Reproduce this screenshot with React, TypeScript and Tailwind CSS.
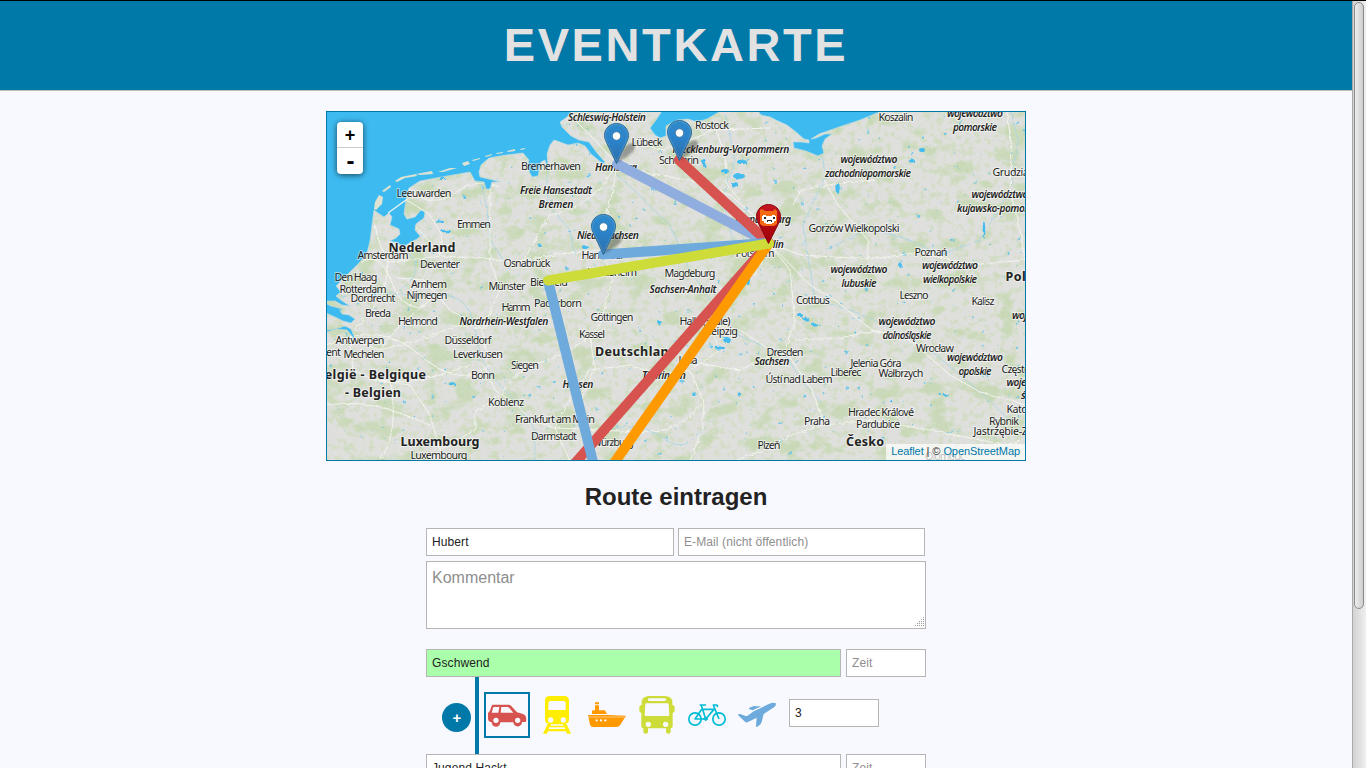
import type { ReactNode } from 'react';

type Kind = 'city' | 'region' | 'country';
type Label = [string, number, number, Kind, number?];

// text, centre x, baseline y, kind, text width
const labels: Label[] = [
  ['Schleswig-Holstein', 607, 121, 'region', 78],
  ['Rostock', 712, 129, 'city', 34],
  ['Lübeck', 647, 146, 'city', 31],
  ['Mecklenburg-Vorpommern', 731, 153, 'region', 117],
  ['Schwerin', 679, 164, 'city', 40],
  ['Hamburg', 616, 171, 'region', 42],
  ['Bremerhaven', 551, 170, 'city', 60],
  ['Freie Hansestadt', 556, 194, 'region', 72],
  ['Bremen', 556, 208, 'region', 35],
  ['Leeuwarden', 424, 197, 'city', 55],
  ['Emmen', 474, 228, 'city', 34],
  ['Nederland', 422, 251, 'country', 67],
  ['Amsterdam', 383, 259, 'city', 51],
  ['Deventer', 440, 268, 'city', 40],
  ['Osnabrück', 527, 267, 'city', 47],
  ['Niedersachsen', 608, 239, 'region', 62],
  ['Hannover', 603, 259, 'city', 43],
  ['Hildesheim', 612, 276, 'city', 50],
  ['Brandenburg', 763, 223, 'region', 56],
  ['Berlin', 771, 248, 'region', 26],
  ['Potsdam', 755, 257, 'city', 39],
  ['Magdeburg', 690, 277, 'city', 51],
  ['Sachsen-Anhalt', 683, 293, 'region', 67],
  ['Den Haag', 356, 281, 'city', 43],
  ['Rotterdam', 363, 293, 'city', 47],
  ['Dordrecht', 373, 302, 'city', 45],
  ['Arnhem', 429, 288, 'city', 36],
  ['Nijmegen', 427, 299, 'city', 41],
  ['Münster', 507, 290, 'city', 37],
  ['Bielefeld', 549, 286, 'city', 38],
  ['Breda', 378, 317, 'city', 26],
  ['Helmond', 418, 325, 'city', 40],
  ['Hamm', 516, 311, 'city', 29],
  ['Paderborn', 558, 307, 'city', 48],
  ['Nordrhein-Westfalen', 504, 325, 'region', 89],
  ['Göttingen', 612, 321, 'city', 43],
  ['Kassel', 592, 338, 'city', 26],
  ['Antwerpen', 360, 344, 'city', 49],
  ['Gent', 330, 356, 'city', 22],
  ['Mechelen', 364, 358, 'city', 41],
  ['België - Belgique', 371, 378, 'country', 110],
  ['- Belgien', 373, 396, 'country', 56],
  ['Düsseldorf', 468, 344, 'city', 47],
  ['Leverkusen', 478, 358, 'city', 50],
  ['Siegen', 525, 369, 'city', 28],
  ['Bonn', 483, 379, 'city', 24],
  ['Koblenz', 506, 406, 'city', 36],
  ['Hessen', 578, 388, 'region', 31],
  ['Frankfurt am Main', 555, 423, 'city', 80],
  ['Darmstadt', 554, 440, 'city', 46],
  ['Luxembourg', 440, 445.5, 'country', 79],
  ['Luxembourg', 439, 459, 'city', 57],
  ['Würzburg', 613, 446, 'city', 42],
  ['Deutschland', 636, 355.5, 'country', 82],
  ['Halle (Saale)', 705, 325, 'city', 51],
  ['Leipzig', 722, 335, 'city', 32],
  ['Jena', 688, 364, 'city', 19],
  ['Thüringen', 664, 379, 'region', 44],
  ['Dresden', 785, 356, 'city', 37],
  ['Sachsen', 772, 365, 'region', 35],
  ['Ústí nad Labem', 799, 383, 'city', 67],
  ['Plzeň', 769, 449, 'city', 23],
  ['Praha', 817, 425, 'city', 26],
  ['Cottbus', 813, 304, 'city', 34],
  ['Liberec', 846, 376, 'city', 31],
  ['Jelenia Góra', 876, 367, 'city', 51],
  ['Wałbrzych', 901, 377, 'city', 45],
  ['Wrocław', 935, 352, 'city', 38],
  ['Hradec Králové', 881, 416, 'city', 66],
  ['Pardubice', 878, 428, 'city', 44],
  ['Česko', 865, 445.5, 'country', 38],
  ['Olomouc', 945, 460, 'city', 40],
  ['Koszalin', 896, 121, 'city', 35],
  ['województwo', 975, 117, 'region', 56],
  ['pomorskie', 975, 131, 'region', 44],
  ['województwo', 869, 163, 'region', 57],
  ['zachodniopomorskie', 868, 177, 'region', 86],
  ['Grudziądz', 1016, 176, 'city', 47],
  ['województwo', 1000, 198, 'region', 57],
  ['kujawsko-pomorskie', 1001, 212, 'region', 88],
  ['Gorzów Wielkopolski', 854, 232, 'city', 91],
  ['Poznań', 931, 256, 'city', 33],
  ['województwo', 859, 273, 'region', 57],
  ['lubuskie', 859, 287, 'region', 35],
  ['województwo', 950, 269, 'region', 56],
  ['wielkopolskie', 950, 283, 'region', 54],
  ['Polska', 1027, 280.5, 'country', 43],
  ['Leszno', 914, 299, 'city', 29],
  ['Kalisz', 983, 305, 'city', 23],
  ['województwo', 907, 325, 'region', 57],
  ['dolnośląskie', 907, 339, 'region', 49],
  ['województwo', 1040, 319, 'region', 56],
  ['województwo', 975, 361, 'region', 56],
  ['opolskie', 975, 375, 'region', 33],
  ['Częstochowa', 1030, 373, 'city', 57],
  ['województwo', 1035, 386, 'region', 57],
  ['śląskie', 1035, 399, 'region', 28],
  ['Katowice', 1027, 413, 'city', 41],
  ['Rybnik', 1004, 425, 'city', 30],
  ['Jastrzębie-Zdrój', 1010, 435, 'city', 73],
];

const land =
  'M374 210 L378 213 384 217 389 213 392 217 390 225 399 229 400 234 396 238 390 241 398 243 403 247 411 242 417 239 424 233 420 236 415 230 416 224 424 218 425 212 421 210 415 217 407 219 404 214 406 200 409 188 420 181 436 178 453 175 470 172 475 181 484 182 486 189 490 189 492 182 500 182 493 180 480 177 479 172 481 165 489 158 506 155 523 153 529 160 527 167 532 177 538 176 541 162 545 160 547 168 547 178 548 165 547 154 550 145 554 140 560 142 568 145 578 143 585 146 591 154 603 164 605 162 597 153 589 142 579 140 571 136 566 131 562 127 560 122 567 117 572 111 662 111 656 120 650 128 655 135 660 138 666 136 666 126 677 120 688 119 697 122 707 119 719 112 728 109 758 111 761 115 770 117 778 121 787 125 796 132 804 139 809 140 809 143 801 142 793 142 794 148 806 151 818 156 824 153 822 146 825 139 832 134 825 134 816 138 811 139 819 134 842 126 860 120 882 111 1026 111 1026 461 326 461 326 332 337 329 347 330 352 336 355 343 354 336 351 329 345 326 335 329 326 330 326 313 335 317 343 321 351 323 355 319 349 315 342 314 339 308 331 306 327 304 327 301 335 301 342 305 350 306 342 301 336 296 341 292 336 286 342 280 350 272 360 262 367 253 370 241 372 225Z';

const islands = [
  'M374 209 L375 202 379 195 383 197 382 204 376 210Z',
  'M382 191 L390 185 391 187 384 192Z',
  'M395 181 L401 177 416 174 417 176 405 178 397 182Z',
  'M416 174 L432 171 433 174 420 175Z',
  'M438 172 L450 168 457 168 443 172Z',
  'M462 163 L468 161 470 164 464 166Z',
  'M472 160 L480 158 480 159 473 161Z',
  'M485 156 L492 154 492 155 486 157Z',
  'M496 153 L503 152 503 153 497 154Z',
  'M507 151 L515 149 515 151 508 152Z',
  'M520 149 L525 148 525 149 521 150Z',
  'M740 111 L753 111 751 114 744 113Z',
];

const majorRoads = [
  'M388 213 L405 200',
  'M360 263 Q380 250 391 281 T426 306',
  'M375 225 Q380 250 388 262 L410 260 440 256 485 258 512 262 560 254 603 250 650 252 700 250 750 255',
  'M388 262 Q388 280 380 300 L362 321 350 338',
  'M408 188 Q430 210 455 193 T500 188',
  'M407 200 L430 215 442 235 440 255',
  'M490 182 L490 260 500 290 482 330 488 360',
  'M482 328 L450 310 424 280 398 278',
  'M350 338 L380 350 420 340 455 326 482 328 510 318 555 320',
  'M350 340 L353 370 374 380 410 382 440 375 470 365',
  'M374 380 L410 385 430 415 440 450 450 461',
  'M440 450 L475 430 475 412 500 395 516 375',
  'M483 365 L495 390 518 406 530 420 555 428 570 461',
  'M516 375 L532 365 555 358 585 340 590 330',
  'M617 164 L600 190 575 208 550 215 535 240 524 260',
  'M617 164 L613 190 605 220 604 254 612 280 600 325 590 338 595 370 575 410',
  'M617 164 L640 145 665 150 715 130 770 128',
  'M617 164 L650 174 690 180 730 195 765 225',
  'M617 164 L590 135 575 120',
  'M716 130 L725 155 727 185 740 200',
  'M769 243 L801 255 850 258 880 258 920 252 970 265 1025 260',
  'M769 243 L735 250 690 256 650 252',
  'M769 243 L755 275 720 290 710 325 720 350 690 370 660 375 630 365 590 370',
  'M769 243 L790 270 795 320 785 350 812 390 825 425 790 435 768 448 735 461',
  'M769 243 L810 285 835 300 872 330 905 338 930 350',
  'M801 190 L840 183 875 180 M793 205 L801 190 M824 180 L838 205 868 240 868 262',
  'M690 370 L704 403 702 430 690 461',
  'M590 370 L570 400 555 428 600 430 635 432 665 430 685 420 704 402',
  'M785 350 L740 370 690 362',
  'M795 340 L840 338 872 331 910 340 950 375 980 392 1010 400 1025 405',
  'M825 425 L870 420 930 430 1005 445 1025 440',
  'M710 325 L740 330 770 350',
  'M1007 112 L1012 150 1010 190 1020 230 1025 260',
  'M370 190 Q420 225 440 255 M430 300 L400 325 380 350',
  'M326 345 Q380 320 420 355 T490 365',
  'M390 382 Q400 430 380 461 M326 405 Q360 400 390 410 T430 425',
];

const rivers = [
  'M603 164 Q630 185 640 196 T670 225 L690 270 710 300 738 335 786 356 804 384 822 403',
  'M547 178 L548 205 570 230 575 255',
  'M336 298 Q370 290 390 293 T440 295 T475 330 T500 385 T535 430 L535 461',
  'M822 156 L826 175 815 198 803 225 810 270 815 300 850 310 885 325 935 354 980 392 1015 425',
  'M826 250 L870 228 910 240 940 255 980 240 1010 190 1018 140 1011 112',
  'M610 430 Q640 420 663 438 T704 426',
  'M725 112 L735 160 722 200 735 245 769 243',
  'M481 182 L487 210 490 240 510 270',
  'M400 290 Q420 278 415 260 L403 247',
];

const lakes: [number, number, number, number][] = [
  [739, 176, 6, 3], [742, 162, 5, 2], [725, 171, 4, 2], [704, 163, 2, 4], [735, 185, 3, 3],
  [585, 247, 3, 2], [838, 188, 1.6, 6], [984, 230, 1.3, 9], [900, 265, 2, 2], [922, 150, 3, 2],
  [912, 161, 3, 1.5], [800, 315, 3, 2], [806, 319, 3, 1.5], [815, 325, 3, 1.5], [727, 340, 4, 2],
  [720, 348, 5, 1.5], [739, 394, 2, 1.5], [452, 384, 3, 2], [946, 395, 3, 1], [940, 394, 1.5, 1],
  [986, 376, 3, 1], [891, 401, 1.2, 1.5], [694, 394, 1.5, 3], [440, 222, 4, 1.5], [446, 231, 5, 1.2],
  [442, 178, 3, 2], [464, 197, 1, 2], [539, 245, 2, 1], [660, 323, 2, 2], [748, 280, 2, 5],
];

function Marker({ x, y }: { x: number; y: number }) {
  return (
    <g transform={`translate(${x - 12.5} ${y - 41})`}>
      <path d="M13 40 L19 27 Q25 18 30 21 Q33 25 27 31Z" fill="#333" opacity=".4" filter="url(#soft)" />
      <path
        d="M12.5 .5 C5.8 .5 .5 5.8 .5 12.3 C.5 15.5 1.8 18 3 20.5 L12.5 40.5 22 20.5 C23.2 18 24.5 15.5 24.5 12.3 C24.5 5.8 19.2 .5 12.5 .5Z"
        fill="url(#pin)"
        stroke="#2e6c97"
      />
      <path d="M12.5 1.5 C6.3 1.5 1.5 6.3 1.5 12.3 C1.5 15 2.8 18 4 20.5 L12.5 38 21 20.5 C22.2 18 23.5 15 23.5 12.3 C23.5 6.3 18.7 1.5 12.5 1.5Z" fill="none" stroke="#fff" opacity=".13" />
      <circle cx="12.5" cy="13" r="4.2" fill="#fff" stroke="#2e6c97" strokeWidth=".7" />
    </g>
  );
}

function HomeMarker() {
  return (
    <g>
      <path
        d="M768.5 204.500 C761.800 204.500 756.500 209.800 756.500 216.300 C756.500 219.500 758 222 759 224.500 L768.500 243.500 778 224.500 C779 222 780.500 219.500 780.500 216.300 C780.500 209.800 775.200 204.500 768.500 204.500Z"
        fill="url(#redPin)"
        stroke="#8c0a10"
      />
      <path d="M760 210 L762 209 765 211 773 211 775 209 777 211 777 224 774 226 763 226 760 224Z" fill="#f56a13" />
      <path d="M763 215 h3 v1 h6 v-1 h3 v1 h1 v5 h-2 v2 h-2 v1 h-6 v-1 h-2 v-2 h-2 v-5 h1Z" fill="#fff" />
      <path d="M764 217h2v2h-2zM773 217h2v2h-2zM767 220h5v2h-1v-1h-3v1h-1z" fill="#2b2b2b" />
    </g>
  );
}

function EventMap() {
  return (
    <svg className="block h-[348px] w-[698px]" viewBox="327 112 698 348">
      <defs>
        <linearGradient id="pin" x1="0" y1="0" x2="0" y2="1">
          <stop offset="0" stopColor="#2f8bcb" />
          <stop offset=".45" stopColor="#2b82c9" />
          <stop offset="1" stopColor="#2e6fa8" />
        </linearGradient>
        <linearGradient id="redPin" x1="0" y1="0" x2="0" y2="1">
          <stop offset="0" stopColor="#c41622" />
          <stop offset="1" stopColor="#a00008" />
        </linearGradient>
        <filter id="soft">
          <feGaussianBlur stdDeviation="1.3" />
        </filter>
        <filter id="forest" x="0" y="0" width="100%" height="100%" colorInterpolationFilters="sRGB">
          <feTurbulence type="fractalNoise" baseFrequency=".04 .055" numOctaves="6" seed="11" />
          <feColorMatrix values="0 0 0 0 .765  0 0 0 0 .845  0 0 0 0 .68  6 0 0 0 -3.2" />
          <feComposite in2="SourceGraphic" operator="in" />
        </filter>
        <filter id="speckle" x="0" y="0" width="100%" height="100%" colorInterpolationFilters="sRGB">
          <feTurbulence type="fractalNoise" baseFrequency=".16" numOctaves="4" seed="4" />
          <feColorMatrix values="0 0 0 0 .8  0 0 0 0 .855  0 0 0 0 .72  0 5 0 0 -2.5" />
          <feComposite in2="SourceGraphic" operator="in" />
        </filter>
        <filter id="ponds" x="0" y="0" width="100%" height="100%" colorInterpolationFilters="sRGB">
          <feTurbulence type="fractalNoise" baseFrequency=".14" numOctaves="4" seed="23" />
          <feColorMatrix values="0 0 0 0 .35  0 0 0 0 .76  0 0 0 0 .93  0 0 12 0 -9.1" />
          <feComposite in2="SourceGraphic" operator="in" />
        </filter>
        <filter id="ragged" x="-5%" y="-5%" width="110%" height="110%">
          <feTurbulence type="fractalNoise" baseFrequency=".2" numOctaves="2" seed="8" />
          <feDisplacementMap in="SourceGraphic" scale="4" />
        </filter>
        <clipPath id="landClip">
          <path d={land} />
        </clipPath>
      </defs>
      <rect x="327" y="112" width="698" height="348" fill="#3dbbf1" />
      <path d={land} fill="#dfe0dd" stroke="#b9dbe4" strokeWidth=".7" />
      {islands.map((d) => (
        <path key={d} d={d} fill="#dde2d2" />
      ))}
      <g clipPath="url(#landClip)">
        <path d={land} filter="url(#speckle)" opacity=".6" />
        <path d={land} filter="url(#forest)" opacity=".72" />
        <path d={land} filter="url(#ponds)" opacity=".8" />
        <g fill="none" stroke="#a9d4e4" strokeWidth=".8" filter="url(#ragged)">
          {rivers.map((d) => (
            <path key={d} d={d} />
          ))}
        </g>
        <g fill="none" stroke="#f4f4ef" strokeWidth="1" strokeLinejoin="round" filter="url(#ragged)">
          {majorRoads.map((d) => (
            <path key={d} d={d} />
          ))}
        </g>
        <g fill="#45bcef" filter="url(#ragged)">
          {lakes.map(([x, y, rx, ry]) => (
            <ellipse key={`${x}-${y}`} cx={x} cy={y} rx={rx} ry={ry} />
          ))}
        </g>
      </g>
      <path d="M388 213 L406 200" stroke="#eef3ee" strokeWidth="1.3" />
      <g textAnchor="middle" fontFamily='"Noto Sans", "Open Sans", sans-serif' stroke="#fff" strokeOpacity=".5" strokeWidth="2" strokeLinejoin="round" paintOrder="stroke" fill="#222">
        {labels.map(([text, x, y, kind, width]) => (
          <text
            key={`${text}-${x}-${y}`}
            x={x}
            y={kind === 'country' ? y + 0.5 : y}
            textLength={width}
            fontSize={kind === 'country' ? 12.5 : kind === 'region' ? 10.3 : 10.8}
            fontWeight={kind === 'city' ? 400 : kind === 'region' ? 600 : 700}
            fontStyle={kind === 'region' ? 'italic' : 'normal'}
          >
            {text}
          </text>
        ))}
      </g>
      <g fill="none" strokeWidth="10" strokeLinecap="round">
        <path d="M572.500 466 L769 243" stroke="#d6534f" />
        <path d="M617 164 L769 243" stroke="#8fadde" />
        <path d="M679 160 L769 243" stroke="#d6534f" />
        <path d="M603 254.500 L769 243" stroke="#6eaadc" />
        <path d="M612 466 L769 243" stroke="#ff9900" />
        <path d="M548 280.500 L594 466" stroke="#6eaadc" />
        <path d="M548 280.500 L769 243.500" stroke="#cddc39" />
      </g>
      <Marker x={679.5} y={161} />
      <Marker x={616.5} y={164} />
      <Marker x={603.5} y={255} />
      <HomeMarker />
    </svg>
  );
}

function Icon({ box, children }: { box: string; children: ReactNode }) {
  return (
    <svg className="block size-[46px]" viewBox={box}>
      {children}
    </svg>
  );
}

function Car() {
  return (
    <Icon box="162 141 138 138">
      <path
        fillRule="evenodd"
        fill="#d6534f"
        d="M189 179 H236 Q240 179 243 182 L261 202 L277 206 Q286 209 288 216 L289 226 L287 231 H276 A13 13 0 0 1 250 232 H211 A13 13 0 0 1 185 232 L179 230 Q175 228 174 221 V204 L179 199 L185 183 Q186 179 189 179Z M190 186 L185 203 H205 L208 186Z M214 186 L212 203 H250 L238 189 Q235 186 232 186Z M198 218 A8 8 0 1 0 198 234 A8 8 0 1 0 198 218Z M263 218 A8 8 0 1 0 263 234 A8 8 0 1 0 263 218Z"
      />
    </Icon>
  );
}

function Train() {
  return (
    <Icon box="312 141 138 138">
      <path
        fillRule="evenodd"
        fill="#ffee00"
        d="M359 153 H403 Q417 153 417 167 V223 Q417 236 404 236 H409 L423 266 H411 L408 259 H354 L351 266 H339 L353 236 H358 Q345 236 345 223 V167 Q345 153 359 153Z M361 168 Q355 168 355 174 V195 H407 V174 Q407 168 401 168Z M362 217 A8 8 0 1 0 362 233 A8 8 0 1 0 362 217Z M400 217 A8 8 0 1 0 400 233 A8 8 0 1 0 400 217Z M363 238 L361 242 H401 L399 238Z M358 247 L356 252 H406 L404 247Z"
      />
    </Icon>
  );
}

function Ship() {
  return (
    <Icon box="462 141 138 138">
      <path
        fillRule="evenodd"
        fill="#ff9900"
        d="M495 172 H507 V178 H495Z M495 181 H507 V196 H525 L531 207 H486 V199 Q486 196 489 196 H495Z M474 210 H534 L588 212 L571 239 Q567 246 559 246 H489 Q482 246 480 239Z M475 215.500 V217 H583 L584 215.500Z M500 222.500 A3.500 3.500 0 1 0 500 229.500 A3.500 3.500 0 1 0 500 222.500Z M513 222.500 A3.500 3.500 0 1 0 513 229.500 A3.500 3.500 0 1 0 513 222.500Z M526 222.500 A3.500 3.500 0 1 0 526 229.500 A3.500 3.500 0 1 0 526 222.500Z"
      />
    </Icon>
  );
}

function Bus() {
  return (
    <Icon box="612 141 138 138">
      <path
        fillRule="evenodd"
        fill="#cddc39"
        d="M657 153 H705 Q724 154 727 168 V179 Q734 181 734 186 V197 Q734 203 728 203 V244 Q728 250 722 250 V260 Q722 266 715 266 Q708 266 708 260 V250 H654 V260 Q654 266 647 266 Q640 266 640 260 V250 Q634 250 634 244 V203 Q628 203 628 197 V186 Q628 181 635 179 V168 Q638 154 657 153Z M657 160 Q654 160 654 164 Q654 168 657 168 H705 Q708 168 708 164 Q708 160 705 160Z M649 175 Q646 175 646 178 L644 210 Q644 213 647 213 H715 Q718 213 718 210 L716 178 Q716 175 713 175Z M655 230 A8 8 0 1 0 655 246 A8 8 0 1 0 655 230Z M707 230 A8 8 0 1 0 707 246 A8 8 0 1 0 707 230Z"
      />
    </Icon>
  );
}

function Bike() {
  return (
    <Icon box="72 141 138 138">
      <g fill="none" stroke="#00bcd4" strokeWidth="5" strokeLinejoin="round">
        <circle cx="105" cy="222" r="18.500" />
        <circle cx="177" cy="222" r="18.500" />
        <path d="M105 222 L125 193 H162 L137 222Z M137 222 L124 181 M119 180 H138 M177 222 L160 180 H170 Q174 181 171 186" />
        <path d="M130 222 H144 M137 216 V228" />
      </g>
    </Icon>
  );
}

function Plane() {
  return (
    <Icon box="222 141 138 138">
      <path
        fill="#6eaadc"
        d="M234 209 Q236 206 240 207 L257 213 Q260 214 263 212 L281 199 L325 178 Q341 171 347 175 Q350 180 343 186 L311 207 L305 231 Q303 236 300 239 L292 245 Q287 247 288 241 L290 218 L264 231 Q259 234 255 230 L236 212Z M267 189 L279 184 Q284 182 289 184 L304 184 L278 196 L267 192Z"
      />
    </Icon>
  );
}

const field =
  'block h-7 rounded-none border border-[#b6b6b6] bg-white px-[5px] text-xs tracking-[0.1px] text-[#222] outline-none placeholder:text-[#8e8e8e] placeholder:opacity-100';

export default function App() {
  return (
    <div className="flex h-screen overflow-hidden border-t border-black bg-[#f8f9ff] font-['Liberation_Sans',Arial,sans-serif] text-[#222]">
      <main className="min-w-0 flex-1">
        <header className="flex h-[90px] items-center justify-center border-b border-[#bbb] bg-[#0078a8]">
          <h1 className="-mt-0.5 text-[47px] leading-none font-bold tracking-[2.6px] text-[#e2e2e2]">EVENTKARTE</h1>
        </header>

        <section className="relative mx-auto mt-5 h-[350px] w-[700px] overflow-hidden border border-[#0078a8]">
          <EventMap />
          <div className="absolute top-[10px] left-[10px] flex w-[26px] flex-col overflow-hidden rounded bg-white text-center text-lg font-bold text-black shadow-[0_1px_6px_rgba(0,0,0,0.65)]">
            <button className="h-[26px] border-b border-[#ccc] leading-[26px]">+</button>
            <button className="h-[26px] pl-px text-2xl leading-[24px]">-</button>
          </div>
          <div className="absolute right-0 bottom-0 h-4 bg-white/70 px-[5px] text-[11px] leading-[15px] tracking-[-0.08px] whitespace-nowrap text-[#333]">
            <a className="text-[#0078a8]">Leaflet</a> | © <a className="text-[#0078a8]">OpenStreetMap</a>
          </div>
        </section>

        <form className="mx-auto w-[500px]">
          <h2 className="mt-[22px] text-center text-2xl leading-7 font-bold">Route eintragen</h2>
          <div className="mt-[17px] flex gap-1">
            <input className={`${field} w-[248px]`} defaultValue="Hubert" />
            <input className={`${field} w-[247px]`} placeholder="E-Mail (nicht öffentlich)" />
          </div>
          <div className="relative mt-[5px]">
            <textarea
              className="block h-[68px] w-full resize-none border border-[#b6b6b6] bg-white px-[5px] pt-1 text-base outline-none placeholder:text-[#8e8e8e] placeholder:opacity-100"
              placeholder="Kommentar"
            />
            <svg className="absolute right-0.5 bottom-0.5 size-[10px]" viewBox="0 0 10 10">
              <path
                d="M9 0h1v1H9zM7 2h1v1H7zM9 2h1v1H9zM5 4h1v1H5zM7 4h1v1H7zM9 4h1v1H9zM3 6h1v1H3zM5 6h1v1H5zM7 6h1v1H7zM9 6h1v1H9zM1 8h1v1H1zM3 8h1v1H3zM5 8h1v1H5zM7 8h1v1H7zM9 8h1v1H9z"
                fill="#999"
              />
            </svg>
          </div>

          <div className="mt-5 flex gap-[5px]">
            <input className={`${field} w-[415px] bg-[#aaffaa]!`} defaultValue="Gschwend" />
            <input className={`${field} w-20`} placeholder="Zeit" />
          </div>
          <div className="flex h-[77px] items-start">
            <button type="button" className="mt-[26px] ml-4 flex size-[29px] items-center justify-center rounded-full bg-[#0078a8] pl-px text-[15px] leading-none font-bold text-white">
              +
            </button>
            <div className="ml-1 h-full w-1 bg-[#0078a8]" />
            <div className="mt-[15px] ml-[5px] flex gap-1">
              <div className="shadow-[inset_0_0_0_2px_#0078a8]">
                <Car />
              </div>
              <Train />
              <Ship />
              <Bus />
              <Bike />
              <Plane />
            </div>
            <input className={`${field} mt-[22px] ml-[9px] w-[90px]`} defaultValue="3" />
          </div>
          <div className="flex gap-[5px]">
            <input className={`${field} w-[415px]`} defaultValue="Jugend Hackt" />
            <input className={`${field} w-20`} placeholder="Zeit" />
          </div>
        </form>
      </main>
      <aside className="w-[14px] border-l border-[#a9a9a9] bg-linear-to-r from-[#d2d2d2] to-[#f0f0f0] pt-px pl-px">
        <div className="h-[607px] w-[10px] rounded-[5px] border border-[#8c8c8c] bg-linear-to-r from-[#eeeeee] to-[#cdcdcd]" />
      </aside>
    </div>
  );
}
